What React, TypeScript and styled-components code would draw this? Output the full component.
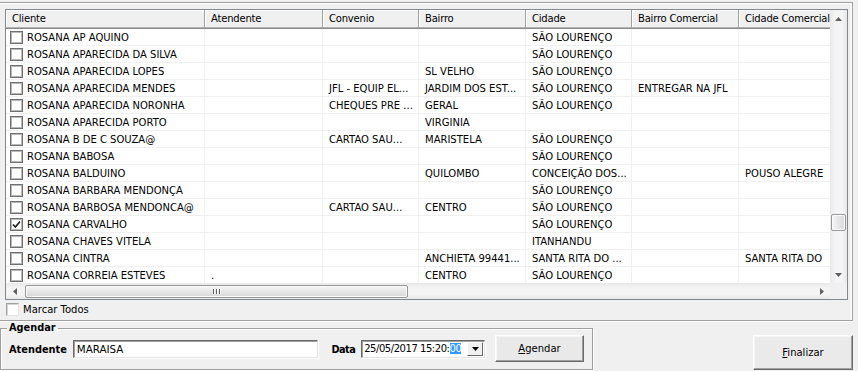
import React from 'react';
import styled, { createGlobalStyle } from 'styled-components';

const GlobalStyle = createGlobalStyle`
  html, body {
    margin: 0;
    padding: 0;
    background: #f0f0f0;
  }
  body {
    font-family: 'DejaVu Sans', 'Liberation Sans', sans-serif;
    font-size: 10px;
    color: #000;
  }
  * {
    box-sizing: border-box;
  }
`;

const COLUMNS = [
  { title: 'Cliente', width: 199 },
  { title: 'Atendente', width: 118 },
  { title: 'Convenio', width: 96 },
  { title: 'Bairro', width: 107 },
  { title: 'Cidade', width: 106 },
  { title: 'Bairro Comercial', width: 107 },
  { title: 'Cidade Comercial', width: 107 },
];

const gridTemplate = COLUMNS.map((c) => c.width + 'px').join(' ');

const SL = 'SÃO LOURENÇO';

// cliente, atendente, convenio, bairro, cidade, bairro comercial, cidade comercial
const ROWS: string[][] = [
  ['ROSANA AP AQUINO', '', '', '', SL, '', ''],
  ['ROSANA APARECIDA DA SILVA', '', '', '', SL, '', ''],
  ['ROSANA APARECIDA LOPES', '', '', 'SL VELHO', SL, '', ''],
  ['ROSANA APARECIDA MENDES', '', 'JFL - EQUIP EL...', 'JARDIM DOS EST...', SL, 'ENTREGAR NA JFL', ''],
  ['ROSANA APARECIDA NORONHA', '', 'CHEQUES PRE ...', 'GERAL', SL, '', ''],
  ['ROSANA APARECIDA PORTO', '', '', 'VIRGINIA', '', '', ''],
  ['ROSANA B DE C SOUZA@', '', 'CARTAO SAU...', 'MARISTELA', SL, '', ''],
  ['ROSANA BABOSA', '', '', '', SL, '', ''],
  ['ROSANA BALDUINO', '', '', 'QUILOMBO', 'CONCEIÇÃO DOS...', '', 'POUSO ALEGRE'],
  ['ROSANA BARBARA MENDONÇA', '', '', '', SL, '', ''],
  ['ROSANA BARBOSA MENDONCA@', '', 'CARTAO SAU...', 'CENTRO', SL, '', ''],
  ['ROSANA CARVALHO', '', '', '', SL, '', ''],
  ['ROSANA CHAVES VITELA', '', '', '', 'ITANHANDU', '', ''],
  ['ROSANA CINTRA', '', '', 'ANCHIETA 99441...', 'SANTA RITA DO ...', '', 'SANTA RITA DO'],
  ['ROSANA CORREIA ESTEVES', '.', '', 'CENTRO', SL, '', ''],
];

const CHECKED = 'ROSANA CARVALHO';

const Window = styled.div`
  width: 858px;
  height: 371px;
  padding-top: 2px;
  overflow: hidden;
`;

const TopPanel = styled.div`
  width: 853px;
  height: 319px;
  border-top: 1px solid #a0a0a0;
  border-right: 1px solid #a0a0a0;
  border-bottom: 1px solid #a0a0a0;
  box-shadow: inset 0 1px 0 #fff, inset -1px 0 0 #fff, 0 1px 0 #fff;
  padding: 6px 4px 0 5px;
`;

const GridFrame = styled.div`
  width: 843px;
  height: 291px;
  border: 1px solid #828790;
  background: #fff;
  display: grid;
  grid-template-columns: 1fr 17px;
  grid-template-rows: 1fr 16px;
`;

const Viewport = styled.div`
  overflow: hidden;
  background: #fff;
`;

const HeaderRow = styled.div`
  display: grid;
  grid-template-columns: ${gridTemplate};
  height: 19px;
  border-bottom: 1px solid #8a8a8a;
`;

const HeaderCell = styled.div`
  height: 18px;
  line-height: 18px;
  padding-left: 6px;
  background: #f0f0f0;
  border-right: 1px solid #a0a0a0;
  border-bottom: 1px solid #b4b4b4;
  box-shadow: inset 1px 1px 0 #fff;
  white-space: nowrap;
  overflow: hidden;
  letter-spacing: -0.2px;
`;

const DataRow = styled.div`
  display: grid;
  grid-template-columns: ${gridTemplate};
  height: 17px;
  border-bottom: 1px solid #f0f0f0;
`;

const DataCell = styled.div`
  line-height: 17px;
  padding-left: 6px;
  border-right: 1px solid #f0f0f0;
  white-space: nowrap;
  overflow: hidden;
`;

const ClientCell = styled(DataCell)`
  display: flex;
  align-items: center;
  gap: 4px;
  padding-left: 4px;
`;

const RowCheck = styled.span`
  flex: none;
  width: 13px;
  height: 13px;
  border: 1px solid #6f6f6f;
  box-shadow: inset 0 0 0 1px #b9b9b9;
  background: #fff;
  display: flex;
  align-items: center;
  justify-content: center;
`;

const VScroll = styled.div`
  background: linear-gradient(to right, #e8e8e8, #f4f4f4 30%, #f4f4f4 70%, #e8e8e8);
  display: flex;
  flex-direction: column;
`;

const HScroll = styled.div`
  background: linear-gradient(#e8e8e8, #f4f4f4 30%, #f4f4f4 70%, #e8e8e8);
  display: flex;
`;

const ArrowBox = styled.div`
  flex: none;
  width: 17px;
  height: 17px;
  display: flex;
  align-items: center;
  justify-content: center;
`;

const HArrowBox = styled(ArrowBox)`
  height: 16px;
`;

const Track = styled.div`
  flex: 1;
`;

const VThumb = styled.div<{ $offset: number }>`
  margin: ${({ $offset }) => $offset}px 0 0 1px;
  width: 15px;
  height: 17px;
  border: 1px solid #979797;
  border-radius: 2px;
  background: linear-gradient(to right, #f6f6f6, #e6e6e6 50%, #d8d8d8);
  box-shadow: inset 0 0 0 1px #fbfbfb;
`;

const HThumb = styled.div<{ $offset: number; $size: number }>`
  margin: 2px 0 0 ${({ $offset }) => $offset}px;
  width: ${({ $size }) => $size}px;
  height: 13px;
  border: 1px solid #979797;
  border-radius: 2px;
  background: linear-gradient(#f6f6f6, #e6e6e6 50%, #d8d8d8);
  box-shadow: inset 0 0 0 1px #fbfbfb;
  display: flex;
  align-items: center;
  justify-content: center;
  gap: 1px;
`;

const Grip = styled.span`
  width: 1px;
  height: 5px;
  background: #5f5f5f;
  box-shadow: 1px 0 0 #fff;
  margin-right: 1px;
`;

const Corner = styled.div`
  background: #f0f0f0;
`;

const MarkRow = styled.label`
  display: flex;
  align-items: center;
  gap: 4px;
  margin: 2px 0 0 1px;
  height: 15px;
`;

const ClassicCheck = styled.span`
  width: 13px;
  height: 13px;
  background: #fff;
  border-top: 1px solid #a0a0a0;
  border-left: 1px solid #a0a0a0;
  border-bottom: 1px solid #e3e3e3;
  border-right: 1px solid #e3e3e3;
  box-shadow: inset 1px 1px 0 #d6d6d6;
`;

const BottomRow = styled.div`
  display: flex;
  justify-content: space-between;
  align-items: flex-start;
  padding-right: 5px;
`;

const GroupBox = styled.fieldset`
  margin: 1px 0 0 0;
  width: 593px;
  min-width: 0;
  height: 48px;
  padding: 1px 8px 0 8px;
  border: 1px solid #a0a0a0;
  box-shadow: inset 1px 1px 0 #fff, 1px 1px 0 #fff;
`;

const Legend = styled.legend`
  padding: 0 2px;
  margin-left: -2px;
  font-weight: bold;
  font-size: 9.8px;
  line-height: 12px;
`;

const FormRow = styled.div`
  display: flex;
  align-items: center;
  height: 27px;
`;

const FieldLabel = styled.span<{ $gap: number }>`
  font-weight: bold;
  font-size: 9.8px;
  margin-right: ${({ $gap }) => $gap}px;
  margin-top: 2px;
`;

const DataLabel = styled(FieldLabel)`
  letter-spacing: -0.6px;
`;

const SunkenBox = styled.div`
  height: 18px;
  background: #fff;
  border-top: 1px solid #696969;
  border-left: 1px solid #696969;
  border-right: 1px solid #e3e3e3;
  border-bottom: 1px solid #e3e3e3;
  box-shadow: inset 1px 1px 0 #a0a0a0, 1px 1px 0 #fff;
  display: flex;
  align-items: center;
  font-size: 10.3px;
  white-space: nowrap;
`;

const TextInput = styled(SunkenBox)`
  width: 247px;
  padding-left: 3px;
  margin-right: 14px;
`;

const DateInput = styled(SunkenBox)`
  width: 125px;
  padding-left: 2px;
  margin-right: 10px;
  font-size: 10px;
  letter-spacing: -0.45px;
`;

const Selected = styled.span`
  background: #3399ff;
  color: #fff;
`;

const DropButton = styled.span`
  margin-left: auto;
  margin-right: 1px;
  width: 16px;
  height: 14px;
  background: #f0f0f0;
  border-top: 1px solid #fff;
  border-left: 1px solid #fff;
  border-right: 1px solid #696969;
  border-bottom: 1px solid #696969;
  display: flex;
  align-items: center;
  justify-content: center;
`;

const Button = styled.button<{ $w: number; $h: number }>`
  flex: none;
  width: ${({ $w }) => $w}px;
  height: ${({ $h }) => $h}px;
  font-family: 'DejaVu Sans', 'Liberation Sans', sans-serif;
  font-size: 10px;
  color: #000;
  padding: 0;
  background: #e9e9e9;
  border-top: 1px solid #fff;
  border-left: 1px solid #fff;
  border-right: 1px solid #696969;
  border-bottom: 1px solid #696969;
  box-shadow: inset -1px -1px 0 #a0a0a0, inset 1px 1px 0 #f5f5f5;
`;

const FinalButton = styled(Button)`
  margin-top: 14px;
  background: #eaeaea;
`;

const Tri = ({ dir, color = '#606060' }: { dir: 'up' | 'down' | 'left' | 'right'; color?: string }) => {
  const pts = {
    up: '0,4 7,4 3.5,0',
    down: '0,0 7,0 3.5,4',
    left: '4,0 4,7 0,3.5',
    right: '0,0 0,7 4,3.5',
  }[dir];
  const vertical = dir === 'up' || dir === 'down';
  return (
    <svg width={vertical ? 7 : 4} height={vertical ? 4 : 7} viewBox={vertical ? '0 0 7 4' : '0 0 4 7'}>
      <polygon points={pts} fill={color} />
    </svg>
  );
};

const Tick = () => (
  <svg width="9" height="9" viewBox="0 0 9 9">
    <polyline points="1,4.5 3.4,7 8,1.5" fill="none" stroke="#222" strokeWidth="1.7" />
  </svg>
);

export default function App() {
  return (
    <>
      <GlobalStyle />
      <Window>
        <TopPanel>
          <GridFrame>
            <Viewport>
              <HeaderRow>
                {COLUMNS.map((c) => (
                  <HeaderCell key={c.title}>{c.title}</HeaderCell>
                ))}
              </HeaderRow>
              {ROWS.map((row) => (
                <DataRow key={row[0]}>
                  <ClientCell>
                    <RowCheck>{row[0] === CHECKED && <Tick />}</RowCheck>
                    {row[0]}
                  </ClientCell>
                  {row.slice(1).map((v, i) => (
                    <DataCell key={i}>{v}</DataCell>
                  ))}
                </DataRow>
              ))}
            </Viewport>
            <VScroll>
              <ArrowBox>
                <Tri dir="up" />
              </ArrowBox>
              <Track>
                <VThumb $offset={187} />
              </Track>
              <ArrowBox>
                <Tri dir="down" />
              </ArrowBox>
            </VScroll>
            <HScroll>
              <HArrowBox>
                <Tri dir="left" />
              </HArrowBox>
              <Track>
                <HThumb $offset={2} $size={383}>
                  <Grip />
                  <Grip />
                  <Grip />
                </HThumb>
              </Track>
              <HArrowBox>
                <Tri dir="right" />
              </HArrowBox>
            </HScroll>
            <Corner />
          </GridFrame>
          <MarkRow>
            <ClassicCheck />
            Marcar Todos
          </MarkRow>
        </TopPanel>
        <BottomRow>
          <GroupBox>
            <Legend>Agendar</Legend>
            <FormRow>
              <FieldLabel $gap={6}>Atendente</FieldLabel>
              <TextInput>MARAISA</TextInput>
              <DataLabel $gap={6}>Data</DataLabel>
              <DateInput>
                25/05/2017 15:20:<Selected>00</Selected>
                <DropButton>
                  <Tri dir="down" color="#000" />
                </DropButton>
              </DateInput>
              <Button $w={89} $h={27}>
                <u>A</u>gendar
              </Button>
            </FormRow>
          </GroupBox>
          <FinalButton $w={100} $h={35}>
            <u>F</u>inalizar
          </FinalButton>
        </BottomRow>
      </Window>
    </>
  );
}
